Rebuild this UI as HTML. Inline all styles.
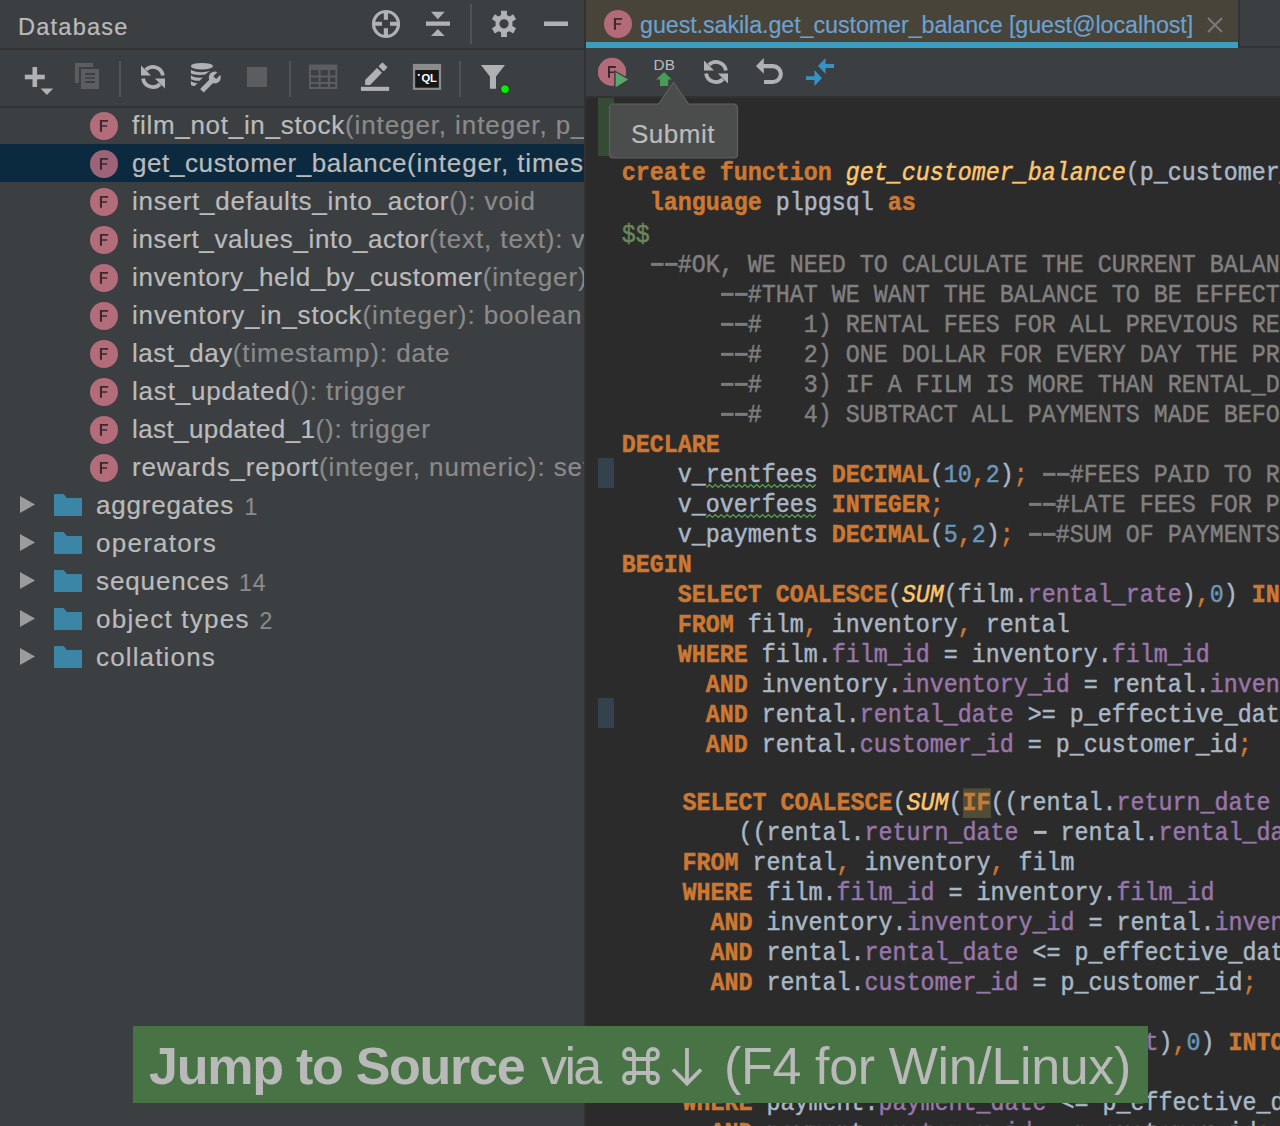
<!DOCTYPE html>
<html><head><meta charset="utf-8"><style>
*{margin:0;padding:0;box-sizing:border-box}
html,body{width:1280px;height:1126px;overflow:hidden;background:#2b2b2b}
body{position:relative;font-family:"Liberation Sans",sans-serif}
.abs{position:absolute}
#left{position:absolute;left:0;top:0;width:584px;height:1126px;background:#3c3f41;overflow:hidden}
#divider{position:absolute;left:584px;top:0;width:2px;height:1126px;background:#323232}
.hb{position:absolute;left:0;width:584px;height:2px;background:#323232}
#title{position:absolute;left:18px;top:10.5px;font-size:23.6px;color:#bbbbbb;letter-spacing:1.2px;line-height:32px;-webkit-text-stroke:0.2px currentColor}
.row{position:absolute;left:0;width:584px;height:38px}
.row.sel{background:#0c2a3f}
.fic{position:absolute;left:90px;width:28px;height:28px;border-radius:50%;background:#b36c7a}
.fic svg{position:absolute;left:0;top:0}
.sel .fic{background:#9d6479}
.fic span{position:absolute;left:0;top:0;width:28px;text-align:center;font-size:16.5px;line-height:28px;color:#3a2a2f;font-weight:normal}
.tt{position:absolute;top:3px;font-size:26px;line-height:32px;color:#bbbbbb;white-space:nowrap;letter-spacing:0.9px;-webkit-text-stroke:0.2px currentColor}
.tt.fd{letter-spacing:1.25px}
.ar{color:#8a8a8a;letter-spacing:0.9px}
.sel .ar{color:#bbbbbb}
.tt.cnt{color:#8a8a8a;font-size:23px;top:4.5px;letter-spacing:0.9px}
.tri{position:absolute;left:19px;top:9px}
.fold{position:absolute;left:54px;top:8px}
#editor{position:absolute;left:586px;top:0;width:694px;height:1126px;background:#2b2b2b;overflow:hidden}
.cl{position:absolute;white-space:pre;font-family:"Liberation Mono",monospace;font-size:23.33px;line-height:30px;color:#a9b7c6;transform:scaleY(1.14);-webkit-text-stroke:0.45px currentColor}
.k{color:#cc7832;font-weight:bold}
.f{color:#ffc66d;font-style:italic}
.p{color:#9876aa}
.n{color:#6897bb}
.c{color:#808080}
.s{color:#6a8759}
.o{color:#cc7832}
.bt{font-size:52px;line-height:60px;color:#b9b9b9;white-space:nowrap}
.dash{color:transparent;-webkit-text-stroke:0;background:linear-gradient(currentColor,currentColor) no-repeat;background-size:12.6px 2.7px;background-position:1.2px 11.4px}
.c .dash{background-image:linear-gradient(#7a7a7a,#7a7a7a)}
.cl>.dash{background-image:linear-gradient(#a9b7c6,#a9b7c6)}
.h{color:#cc7832;font-weight:bold;background:#4f4d35}
</style></head><body>
<div id="left">
  <div id="title">Database</div>
  <div class="hb" style="top:48px"></div>
  <div class="hb" style="top:106px"></div>
  <div id="tree"><div class="row" style="top:106px"><div class="fic" style="top:6px"><svg width="28" height="28" viewBox="0 0 28 28"><path d="M9.9 8 H18.1 V9.8 H12 V13.3 H17.1 V14.8 H12 V19.8 H9.9 Z" fill="#3b292e"/></svg></div><div class="tt" style="left:132px;letter-spacing:0.71px">film_not_in_stock<span class="ar">(integer, integer, p_film_count integer): setof integer</span></div></div>
<div class="row sel" style="top:144px"><div class="fic" style="top:6px"><svg width="28" height="28" viewBox="0 0 28 28"><path d="M9.9 8 H18.1 V9.8 H12 V13.3 H17.1 V14.8 H12 V19.8 H9.9 Z" fill="#3b292e"/></svg></div><div class="tt" style="left:132px;letter-spacing:0.60px">get_customer_balance<span class="ar">(integer, timestamp without time zone): numeric</span></div></div>
<div class="row" style="top:182px"><div class="fic" style="top:6px"><svg width="28" height="28" viewBox="0 0 28 28"><path d="M9.9 8 H18.1 V9.8 H12 V13.3 H17.1 V14.8 H12 V19.8 H9.9 Z" fill="#3b292e"/></svg></div><div class="tt" style="left:132px;letter-spacing:0.75px">insert_defaults_into_actor<span class="ar">(): void</span></div></div>
<div class="row" style="top:220px"><div class="fic" style="top:6px"><svg width="28" height="28" viewBox="0 0 28 28"><path d="M9.9 8 H18.1 V9.8 H12 V13.3 H17.1 V14.8 H12 V19.8 H9.9 Z" fill="#3b292e"/></svg></div><div class="tt" style="left:132px;letter-spacing:0.63px">insert_values_into_actor<span class="ar">(text, text): void</span></div></div>
<div class="row" style="top:258px"><div class="fic" style="top:6px"><svg width="28" height="28" viewBox="0 0 28 28"><path d="M9.9 8 H18.1 V9.8 H12 V13.3 H17.1 V14.8 H12 V19.8 H9.9 Z" fill="#3b292e"/></svg></div><div class="tt" style="left:132px;letter-spacing:0.70px">inventory_held_by_customer<span class="ar">(integer): integer</span></div></div>
<div class="row" style="top:296px"><div class="fic" style="top:6px"><svg width="28" height="28" viewBox="0 0 28 28"><path d="M9.9 8 H18.1 V9.8 H12 V13.3 H17.1 V14.8 H12 V19.8 H9.9 Z" fill="#3b292e"/></svg></div><div class="tt" style="left:132px;letter-spacing:0.84px">inventory_in_stock<span class="ar">(integer): boolean</span></div></div>
<div class="row" style="top:334px"><div class="fic" style="top:6px"><svg width="28" height="28" viewBox="0 0 28 28"><path d="M9.9 8 H18.1 V9.8 H12 V13.3 H17.1 V14.8 H12 V19.8 H9.9 Z" fill="#3b292e"/></svg></div><div class="tt" style="left:132px;letter-spacing:0.49px">last_day<span class="ar">(timestamp): date</span></div></div>
<div class="row" style="top:372px"><div class="fic" style="top:6px"><svg width="28" height="28" viewBox="0 0 28 28"><path d="M9.9 8 H18.1 V9.8 H12 V13.3 H17.1 V14.8 H12 V19.8 H9.9 Z" fill="#3b292e"/></svg></div><div class="tt" style="left:132px;letter-spacing:0.80px">last_updated<span class="ar">(): trigger</span></div></div>
<div class="row" style="top:410px"><div class="fic" style="top:6px"><svg width="28" height="28" viewBox="0 0 28 28"><path d="M9.9 8 H18.1 V9.8 H12 V13.3 H17.1 V14.8 H12 V19.8 H9.9 Z" fill="#3b292e"/></svg></div><div class="tt" style="left:132px;letter-spacing:0.40px">last_updated_1<span class="ar">(): trigger</span></div></div>
<div class="row" style="top:448px"><div class="fic" style="top:6px"><svg width="28" height="28" viewBox="0 0 28 28"><path d="M9.9 8 H18.1 V9.8 H12 V13.3 H17.1 V14.8 H12 V19.8 H9.9 Z" fill="#3b292e"/></svg></div><div class="tt" style="left:132px;letter-spacing:0.86px">rewards_report<span class="ar">(integer, numeric): setof customer</span></div></div>
<div class="row" style="top:486px"><svg class="tri" width="18" height="20" viewBox="0 0 18 20"><path d="M1 1 L16 9.5 L1 18 Z" fill="#9c9c9c"/></svg><svg class="fold" width="28" height="22" viewBox="0 0 28 22"><path d="M0 0 H9.5 L13 4 H28 V22 H0 Z" fill="#3b86a6"/></svg><div class="tt fd" style="left:96px;letter-spacing:0.800px">aggregates</div><div class="tt cnt" style="left:244.5px">1</div></div>
<div class="row" style="top:524px"><svg class="tri" width="18" height="20" viewBox="0 0 18 20"><path d="M1 1 L16 9.5 L1 18 Z" fill="#9c9c9c"/></svg><svg class="fold" width="28" height="22" viewBox="0 0 28 22"><path d="M0 0 H9.5 L13 4 H28 V22 H0 Z" fill="#3b86a6"/></svg><div class="tt fd" style="left:96px;letter-spacing:1.250px">operators</div></div>
<div class="row" style="top:562px"><svg class="tri" width="18" height="20" viewBox="0 0 18 20"><path d="M1 1 L16 9.5 L1 18 Z" fill="#9c9c9c"/></svg><svg class="fold" width="28" height="22" viewBox="0 0 28 22"><path d="M0 0 H9.5 L13 4 H28 V22 H0 Z" fill="#3b86a6"/></svg><div class="tt fd" style="left:96px;letter-spacing:0.875px">sequences</div><div class="tt cnt" style="left:239.0px">14</div></div>
<div class="row" style="top:600px"><svg class="tri" width="18" height="20" viewBox="0 0 18 20"><path d="M1 1 L16 9.5 L1 18 Z" fill="#9c9c9c"/></svg><svg class="fold" width="28" height="22" viewBox="0 0 28 22"><path d="M0 0 H9.5 L13 4 H28 V22 H0 Z" fill="#3b86a6"/></svg><div class="tt fd" style="left:96px;letter-spacing:1.250px">object types</div><div class="tt cnt" style="left:259.5px">2</div></div>
<div class="row" style="top:638px"><svg class="tri" width="18" height="20" viewBox="0 0 18 20"><path d="M1 1 L16 9.5 L1 18 Z" fill="#9c9c9c"/></svg><svg class="fold" width="28" height="22" viewBox="0 0 28 22"><path d="M0 0 H9.5 L13 4 H28 V22 H0 Z" fill="#3b86a6"/></svg><div class="tt fd" style="left:96px;letter-spacing:1.150px">collations</div></div></div>
</div>
<div id="divider"></div>
<div id="editor-wrap">
 <div class="abs" style="left:586px;top:96px;width:694px;height:1030px;background:#2b2b2b"></div>
 <div class="cl" style="top:159.19px;left:621.70px;transform-origin:0 21.21px"><span class="k">create</span> <span class="k">function</span> <span class="f">get_customer_balance</span>(p_customer_id <span class="k">INTEGER</span><span class="o">,</span> p_effective_date <span class="k">TIMESTAMP</span>)</div>
<div class="cl" style="top:188.99px;left:621.70px;transform-origin:0 21.21px">  <span class="k">language</span> plpgsql <span class="k">as</span></div>
<div class="cl" style="top:220.79px;left:621.70px;transform-origin:0 21.21px"><span class="s">$$</span></div>
<div class="cl" style="top:250.79px;left:621.70px;transform-origin:0 21.21px">  <span class="c"><span class="dash">-</span><span class="dash">-</span>#OK, WE NEED TO CALCULATE THE CURRENT BALANCE</span></div>
<div class="cl" style="top:280.79px;left:621.70px;transform-origin:0 21.21px">       <span class="c"><span class="dash">-</span><span class="dash">-</span>#THAT WE WANT THE BALANCE TO BE EFFECTIVE</span></div>
<div class="cl" style="top:310.79px;left:621.70px;transform-origin:0 21.21px">       <span class="c"><span class="dash">-</span><span class="dash">-</span>#   1) RENTAL FEES FOR ALL PREVIOUS RENTALS</span></div>
<div class="cl" style="top:340.79px;left:621.70px;transform-origin:0 21.21px">       <span class="c"><span class="dash">-</span><span class="dash">-</span>#   2) ONE DOLLAR FOR EVERY DAY THE PREVIOUS</span></div>
<div class="cl" style="top:370.79px;left:621.70px;transform-origin:0 21.21px">       <span class="c"><span class="dash">-</span><span class="dash">-</span>#   3) IF A FILM IS MORE THAN RENTAL_DURATION</span></div>
<div class="cl" style="top:400.79px;left:621.70px;transform-origin:0 21.21px">       <span class="c"><span class="dash">-</span><span class="dash">-</span>#   4) SUBTRACT ALL PAYMENTS MADE BEFORE</span></div>
<div class="cl" style="top:430.79px;left:621.70px;transform-origin:0 21.21px"><span class="k">DECLARE</span></div>
<div class="cl" style="top:460.79px;left:621.70px;transform-origin:0 21.21px">    v_rentfees <span class="k">DECIMAL</span>(<span class="n">10</span><span class="o">,</span><span class="n">2</span>)<span class="o">;</span> <span class="c"><span class="dash">-</span><span class="dash">-</span>#FEES PAID TO RENT</span></div>
<div class="cl" style="top:490.79px;left:621.70px;transform-origin:0 21.21px">    v_overfees <span class="k">INTEGER</span><span class="o">;</span>      <span class="c"><span class="dash">-</span><span class="dash">-</span>#LATE FEES FOR PRIOR</span></div>
<div class="cl" style="top:520.79px;left:621.70px;transform-origin:0 21.21px">    v_payments <span class="k">DECIMAL</span>(<span class="n">5</span><span class="o">,</span><span class="n">2</span>)<span class="o">;</span> <span class="c"><span class="dash">-</span><span class="dash">-</span>#SUM OF PAYMENTS MADE</span></div>
<div class="cl" style="top:550.79px;left:621.70px;transform-origin:0 21.21px"><span class="k">BEGIN</span></div>
<div class="cl" style="top:580.79px;left:621.70px;transform-origin:0 21.21px">    <span class="k">SELECT</span> <span class="k">COALESCE</span>(<span class="f">SUM</span>(film.<span class="p">rental_rate</span>)<span class="o">,</span><span class="n">0</span>) <span class="k">INTO</span></div>
<div class="cl" style="top:610.79px;left:621.70px;transform-origin:0 21.21px">    <span class="k">FROM</span> film<span class="o">,</span> inventory<span class="o">,</span> rental</div>
<div class="cl" style="top:640.79px;left:621.70px;transform-origin:0 21.21px">    <span class="k">WHERE</span> film.<span class="p">film_id</span> = inventory.<span class="p">film_id</span></div>
<div class="cl" style="top:670.79px;left:621.70px;transform-origin:0 21.21px">      <span class="k">AND</span> inventory.<span class="p">inventory_id</span> = rental.<span class="p">inventory_id</span></div>
<div class="cl" style="top:700.79px;left:621.70px;transform-origin:0 21.21px">      <span class="k">AND</span> rental.<span class="p">rental_date</span> &gt;= p_effective_date</div>
<div class="cl" style="top:730.79px;left:621.70px;transform-origin:0 21.21px">      <span class="k">AND</span> rental.<span class="p">customer_id</span> = p_customer_id<span class="o">;</span></div>
<div class="cl" style="top:788.79px;left:626.50px;transform-origin:0 21.21px">    <span class="k">SELECT</span> <span class="k">COALESCE</span>(<span class="f">SUM</span>(<span class="h">IF</span>((rental.<span class="p">return_date</span> &gt; </div>
<div class="cl" style="top:818.79px;left:626.50px;transform-origin:0 21.21px">        ((rental.<span class="p">return_date</span> <span class="dash">-</span> rental.<span class="p">rental_date</span></div>
<div class="cl" style="top:848.79px;left:626.50px;transform-origin:0 21.21px">    <span class="k">FROM</span> rental<span class="o">,</span> inventory<span class="o">,</span> film</div>
<div class="cl" style="top:878.79px;left:626.50px;transform-origin:0 21.21px">    <span class="k">WHERE</span> film.<span class="p">film_id</span> = inventory.<span class="p">film_id</span></div>
<div class="cl" style="top:908.79px;left:626.50px;transform-origin:0 21.21px">      <span class="k">AND</span> inventory.<span class="p">inventory_id</span> = rental.<span class="p">inventory_id</span></div>
<div class="cl" style="top:938.79px;left:626.50px;transform-origin:0 21.21px">      <span class="k">AND</span> rental.<span class="p">rental_date</span> &lt;= p_effective_date</div>
<div class="cl" style="top:968.79px;left:626.50px;transform-origin:0 21.21px">      <span class="k">AND</span> rental.<span class="p">customer_id</span> = p_customer_id<span class="o">;</span></div>
<div class="cl" style="top:1028.79px;left:626.50px;transform-origin:0 21.21px">    <span class="k">SELECT</span> <span class="k">COALESCE</span>(<span class="f">SUM</span>(payment.<span class="p">amount</span>)<span class="o">,</span><span class="n">0</span>) <span class="k">INTO</span></div>
<div class="cl" style="top:1058.79px;left:626.50px;transform-origin:0 21.21px">    <span class="k">FROM</span> payment</div>
<div class="cl" style="top:1088.79px;left:626.50px;transform-origin:0 21.21px">    <span class="k">WHERE</span> payment.<span class="p">payment_date</span> &lt;= p_effective_date</div>
<div class="cl" style="top:1118.79px;left:626.50px;transform-origin:0 21.21px">      <span class="k">AND</span> payment.<span class="p">customer_id</span> = p_customer_id<span class="o">;</span></div>
<svg class="abs" style="left:0;top:0" width="1280" height="600" viewBox="0 0 1280 600"><path d="M706.5 487.4 L709.5 484.6 L712.4 487.4 L715.4 484.6 L718.3 487.4 L721.3 484.6 L724.2 487.4 L727.2 484.6 L730.1 487.4 L733.1 484.6 L736.0 487.4 L739.0 484.6 L741.9 487.4 L744.9 484.6 L747.8 487.4 L750.8 484.6 L753.7 487.4 L756.7 484.6 L759.6 487.4 L762.6 484.6 L765.5 487.4 L768.5 484.6 L771.4 487.4 L774.4 484.6 L777.3 487.4 L780.3 484.6 L783.2 487.4 L786.2 484.6 L789.1 487.4 L792.1 484.6 L795.0 487.4 L798.0 484.6 L800.9 487.4 L803.9 484.6 L806.8 487.4 L809.8 484.6 L812.7 487.4 L815.7 484.6" fill="none" stroke="#5aa157" stroke-width="1.3"/><path d="M706.5 517.4 L709.5 514.6 L712.4 517.4 L715.4 514.6 L718.3 517.4 L721.3 514.6 L724.2 517.4 L727.2 514.6 L730.1 517.4 L733.1 514.6 L736.0 517.4 L739.0 514.6 L741.9 517.4 L744.9 514.6 L747.8 517.4 L750.8 514.6 L753.7 517.4 L756.7 514.6 L759.6 517.4 L762.6 514.6 L765.5 517.4 L768.5 514.6 L771.4 517.4 L774.4 514.6 L777.3 517.4 L780.3 514.6 L783.2 517.4 L786.2 514.6 L789.1 517.4 L792.1 514.6 L795.0 517.4 L798.0 514.6 L800.9 517.4 L803.9 514.6 L806.8 517.4 L809.8 514.6 L812.7 517.4 L815.7 514.6" fill="none" stroke="#5aa157" stroke-width="1.3"/></svg>
 <!-- tab bar -->
 <div class="abs" style="left:586px;top:0;width:694px;height:48px;background:#3c3f41"></div>
 <div class="abs" style="left:586px;top:0;width:652px;height:42px;background:#48443a"></div>
 <div class="abs" style="left:586px;top:42px;width:652px;height:6px;background:#3d9dbf"></div>
 <div class="abs" style="left:1238px;top:0;width:2px;height:48px;background:#323436"></div>
 <div class="abs" style="left:1240px;top:46px;width:40px;height:2px;background:#323436"></div>
 <div class="abs" style="left:604px;top:10px;width:28px;height:28px;border-radius:50%;background:#b46b79"><svg width="28" height="28" viewBox="0 0 28 28" style="position:absolute;left:0;top:0"><path d="M9.9 8 H18.1 V9.8 H12 V13.3 H17.1 V14.8 H12 V19.8 H9.9 Z" fill="#3b292e"/></svg></div>
 <div class="abs" style="left:640px;top:9.7px;font-size:23.3px;line-height:30px;color:#6ca2d2;white-space:nowrap;letter-spacing:-0.08px;-webkit-text-stroke:0.15px currentColor">guest.sakila.get_customer_balance [guest@localhost]</div>
 <!-- editor toolbar -->
 <div class="abs" style="left:586px;top:48px;width:694px;height:48px;background:#3c3f41"></div>
 <div class="abs" style="left:586px;top:96px;width:694px;height:2px;background:#323232"></div>

<svg class="abs" style="left:0;top:0" width="1280" height="200" viewBox="0 0 1280 200">
 <g fill="#afb1b3">
  <!-- crosshair -->
  <circle cx="386" cy="24" r="12.5" fill="none" stroke="#afb1b3" stroke-width="3.2"/>
  <rect x="383.8" y="11" width="4.2" height="8.8"/>
  <rect x="383.8" y="28.2" width="4.2" height="8.8"/>
  <rect x="373" y="21.8" width="9" height="4"/>
  <rect x="390" y="21.8" width="9" height="4"/>
  <!-- collapse -->
  <rect x="426" y="21.5" width="24" height="4.3"/>
  <path d="M431 11.7 H444.7 L437.85 19.25 Z"/>
  <path d="M431 36.1 H444.7 L437.85 28.9 Z"/>
  <!-- gear -->
  <g transform="translate(504,23.8)">
   <path fill-rule="evenodd" d="M-2.95 -13.1 H2.95 V-8.8 L5.5 -7.4 L9.2 -9.6 L12.1 -4.5 L8.4 -2.3 V2.3 L12.1 4.5 L9.2 9.6 L5.5 7.4 L2.95 8.8 V13.1 H-2.95 V8.8 L-5.5 7.4 L-9.2 9.6 L-12.1 4.5 L-8.4 2.3 V-2.3 L-12.1 -4.5 L-9.2 -9.6 L-5.5 -7.4 L-2.95 -8.8 Z M0 -4.6 A4.6 4.6 0 1 0 0.01 -4.6 Z"/>
  </g>
  <!-- minus -->
  <rect x="544" y="21.5" width="24" height="4.5"/>
 </g>
 <rect x="470" y="4" width="2" height="40" fill="#505355"/>
 <!-- left toolbar -->
 <g fill="#afb1b3">
  <rect x="24.8" y="74.7" width="20" height="4.6"/>
  <rect x="32.5" y="67" width="4.6" height="20"/>
  <path d="M40.6 88.6 H53.2 L46.9 95 Z"/>
 </g>
 <g fill="#5c5d5e">
  <path d="M74.9 63 H93 V66.9 H78.9 V82.9 H74.9 Z"/>
  <path fill-rule="evenodd" d="M80.9 68.9 H99 V88.9 H80.9 Z M85.2 73.1 V74.9 H95 V73.1 Z M85.2 77.2 V78.8 H95 V77.2 Z M85.2 81.1 V82.9 H95 V81.1 Z"/>
 </g>
 <rect x="119" y="61" width="2" height="36" fill="#505355"/>
 <g transform="translate(141,65)" fill="#afb1b3">
  <path d="M21.9 10.6 A10 10 0 0 0 4.93 4.93" fill="none" stroke="#afb1b3" stroke-width="3.8"/>
  <path d="M0 0.5 V10.6 H10.1 Z"/>
  <path d="M2.1 13.4 A10 10 0 0 0 19.07 19.07" fill="none" stroke="#afb1b3" stroke-width="3.8"/>
  <path d="M24 23.5 V13.4 H13.9 Z"/>
 </g>
 <g transform="translate(185,57)" fill="#afb1b3">
  <ellipse cx="16.9" cy="9.2" rx="11.1" ry="3.3"/>
  <path d="M5.9 12.8 C9 15.6 20 15.9 25 13.8 L20.2 17.6 C14 18.3 8 17.7 5.9 16.5 Z"/>
  <path d="M5.9 18.2 C9 20.6 14 21.1 17.8 20.4 L14.6 23.8 C11 24.1 7.5 23.3 5.9 22.3 Z"/>
  <path d="M5.9 23.9 C8 25.6 10.5 26.1 12.6 25.9 L9.6 29 C8 29 6.5 28.4 5.9 27.7 Z"/>
  <path d="M16.9 33.8 L27 23.5" stroke="#afb1b3" stroke-width="5" fill="none"/>
  <circle cx="29.8" cy="20.6" r="6"/><path d="M28.3 19.2 L31.2 22.1 L37.5 15.8 L34.6 12.9 Z" fill="#3c3f41"/>
 </g>
 <rect x="247" y="67" width="20" height="20" fill="#5c5d5e"/>
 <rect x="289" y="61" width="2" height="36" fill="#505355"/>
 <g fill="#5c5d5e">
  <path fill-rule="evenodd" d="M309 64.6 H337.3 V89 H309 Z M311 70 V75.4 H318.6 V70 Z M320.6 70 V75.4 H327.9 V70 Z M329.9 70 V75.4 H335.3 V70 Z M311 77.4 V82 H318.6 V77.4 Z M320.6 77.4 V82 H327.9 V77.4 Z M329.9 77.4 V82 H335.3 V77.4 Z M311 84 V87 H318.6 V84 Z M320.6 84 V87 H327.9 V84 Z M329.9 84 V87 H335.3 V84 Z"/>
 </g>
 <g transform="translate(355,57)" fill="#afb1b3">
  <path d="M10.1 23.1 L22 11 L27 15.8 L15.1 27.9 H10.1 Z"/>
  <path d="M24 9.2 L27.5 5.9 L32 10.3 L28.6 14 Z" stroke="#afb1b3" stroke-width="1" stroke-linejoin="round"/>
  <rect x="5.9" y="29.8" width="28.2" height="4.1"/>
 </g>
 <g transform="translate(407,57)">
  <rect x="5.9" y="6.9" width="28.2" height="26" fill="#8c8c8c"/>
  <rect x="8.2" y="13" width="23.6" height="17.7" fill="#151717"/>
  <rect x="10.8" y="17" width="2" height="1.8" fill="#ffffff"/>
  <text x="14.4" y="25.2" font-family="Liberation Sans" font-weight="bold" font-size="11.2" fill="#ffffff">QL</text>
 </g>
 <rect x="459" y="61" width="2" height="36" fill="#505355"/>
 <g transform="translate(475,57)">
  <path d="M5.9 8 H30 L21 19.4 V31.8 H14.9 V19.4 Z" fill="#afb1b3"/>
  <circle cx="30" cy="32.1" r="4.6" fill="#2b1e2b"/>
  <circle cx="30" cy="32.1" r="3.9" fill="#00f000"/>
 </g>
 <!-- editor toolbar -->
 <g transform="translate(594,52)">
  <circle cx="18" cy="19.9" r="14.1" fill="#b36b7a"/>
  <path d="M14 14 H21.8 V15.9 H16 V19.4 H19.9 V21 H16 V25.8 H14 Z" fill="#3a262b"/>
  <path d="M20.2 18 V37.5 L36.6 27.4 Z" fill="#3c3f41"/>
  <path d="M21.7 20.2 V35.2 L34.1 27.4 Z" fill="#59a869"/>
 </g>
 <g transform="translate(644,52)">
  <text x="9.4" y="17.9" font-family="Liberation Sans" font-size="15.3" fill="#bdbdbd" letter-spacing="0.3">DB</text>
  <path d="M20.1 20.1 L27.9 27.5 H24.2 V33.9 H16 V27.5 H12.1 Z" fill="#499c54"/>
 </g>
 <g transform="translate(704,60)" fill="#afb1b3">
  <path d="M21.9 10.6 A10 10 0 0 0 4.93 4.93" fill="none" stroke="#afb1b3" stroke-width="3.8"/>
  <path d="M0 0.5 V10.6 H10.1 Z"/>
  <path d="M2.1 13.4 A10 10 0 0 0 19.07 19.07" fill="none" stroke="#afb1b3" stroke-width="3.8"/>
  <path d="M24 23.5 V13.4 H13.9 Z"/>
 </g>
 <g transform="translate(748,52)" fill="#afb1b3">
  <path d="M8 13.9 L15.8 6 V21.8 Z"/>
  <path d="M15 14.1 H24.9 A7.95 7.95 0 0 1 24.9 30 H16" fill="none" stroke="#afb1b3" stroke-width="4.1"/>
 </g>
 <g transform="translate(800,52)" fill="#3592c4">
  <path d="M17.9 13.9 L25.6 6 V12.1 H34.1 V16 H25.6 V21.8 Z"/>
  <path d="M22 25.9 L14.4 17.9 V24.2 H5.9 V27.9 H14.4 V34.1 Z"/>
 </g>
 <!-- tab close -->
 <path d="M1208 18 L1222 32 M1222 18 L1208 32" stroke="#7b7b7b" stroke-width="1.8"/>
</svg>
 <!-- gutter -->
 <div class="abs" style="left:598px;top:98px;width:16px;height:58px;background:#354b35"></div>
 <div class="abs" style="left:598px;top:458px;width:16px;height:30px;background:#34424d"></div>
 <div class="abs" style="left:598px;top:698px;width:16px;height:30px;background:#34424d"></div>
 <!-- tooltip -->
 <svg class="abs" style="left:600px;top:78px" width="150" height="90" viewBox="0 0 150 90">
   <path d="M13.5 26 H58.5 L73.5 4.5 L88.5 26 H133.5 Q137.5 26 137.5 30 V76 Q137.5 80 133.5 80 H13.5 Q9.5 80 9.5 76 V30 Q9.5 26 13.5 26 Z" fill="#4b4d4d" stroke="#5e6061" stroke-width="1.2"/>
 </svg>
 <div class="abs" style="left:631px;top:117.7px;font-size:26px;line-height:32px;color:#bbbbbb;letter-spacing:0.5px;-webkit-text-stroke:0.2px currentColor">Submit</div>
</div>
<!-- banner -->
<div class="abs" style="left:133px;top:1026px;width:1015px;height:77px;background:#477345"></div>
<div class="abs bt" style="left:149px;top:1036px;font-weight:bold;letter-spacing:-1.25px">Jump to Source</div>
<div class="abs bt" style="left:541px;top:1036px;letter-spacing:-2.6px">via</div>
<svg class="abs" style="left:622px;top:1047px" width="40" height="40" viewBox="0 0 40 40"><path d="M12 12 V7 A5 5 0 1 0 7 12 H31 A5 5 0 1 0 26 7 V31 A5 5 0 1 0 31 26 H7 A5 5 0 1 0 12 31 Z" fill="none" stroke="#b9b9b9" stroke-width="3.8"/></svg>
<svg class="abs" style="left:670px;top:1046px" width="34" height="42" viewBox="0 0 34 42"><path d="M17 2 V37 M3 23.5 L17 37.5 L31 23.5" fill="none" stroke="#b9b9b9" stroke-width="3.8"/></svg>
<div class="abs bt" style="left:724px;top:1036px;letter-spacing:-0.35px">(F4 for Win/Linux)</div>
</body></html>
